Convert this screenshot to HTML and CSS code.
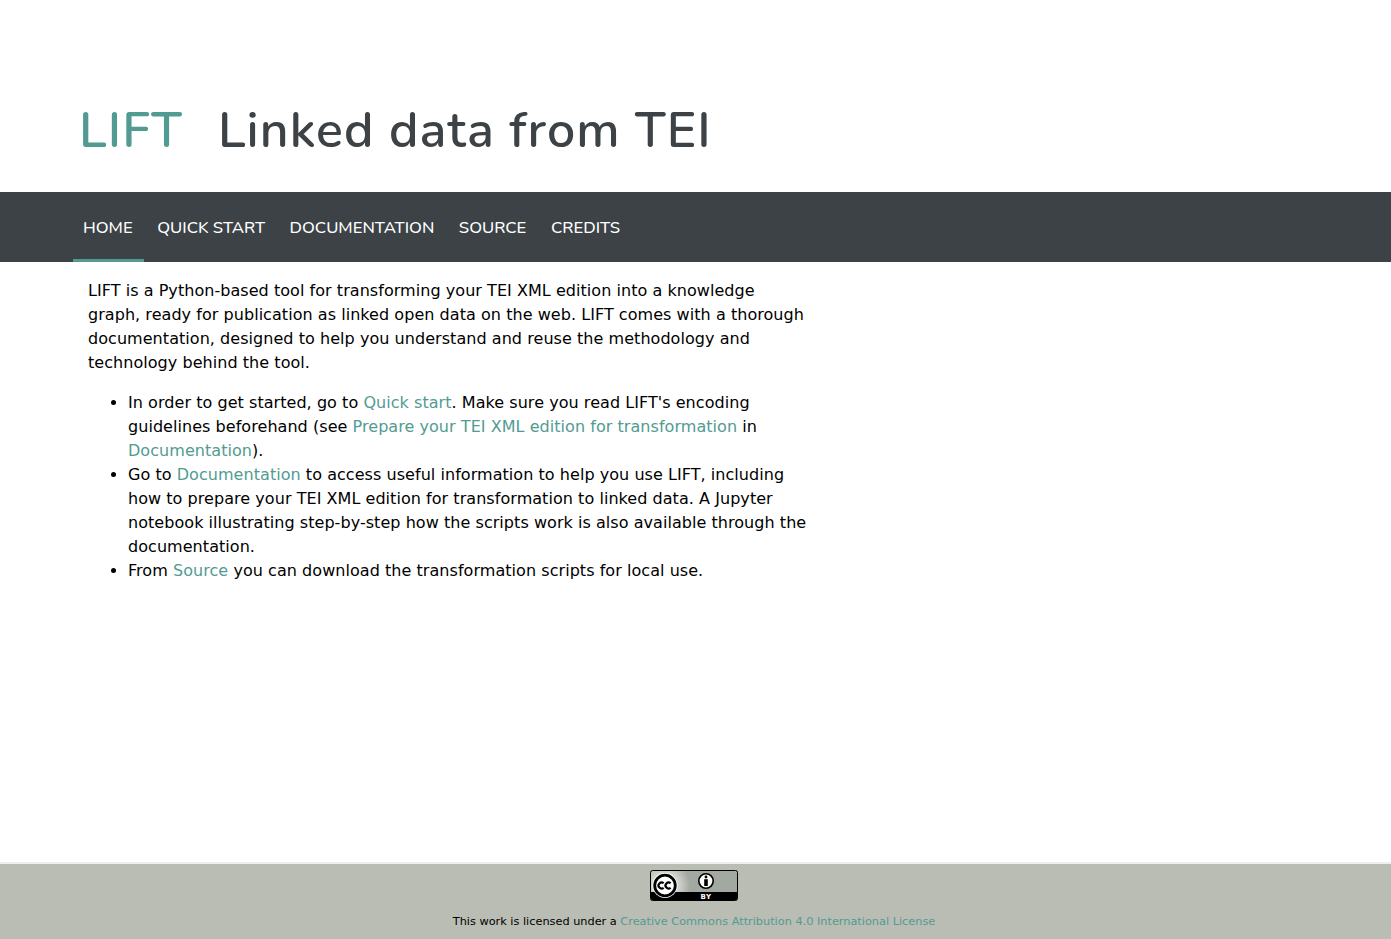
FILE: index.html
```html
<!DOCTYPE html>
<html lang="en">
<head>
    <meta charset="UTF-8">
    <title>LIFT</title>
    <link rel="stylesheet" href="styles.css">
</head>
<body>
    <header class="site-header">
        <h1 class="site-title"><span class="site-name">LIFT</span>Linked data from TEI</h1>
    </header>
    <nav class="navbar">
        <a class="nav-link active" href="#">HOME</a>
        <a class="nav-link" href="#">QUICK START</a>
        <a class="nav-link" href="#">DOCUMENTATION</a>
        <a class="nav-link" href="#">SOURCE</a>
        <a class="nav-link" href="#">CREDITS</a>
    </nav>
    <main class="content">
        <p>LIFT is a Python-based tool for transforming your TEI XML edition into a knowledge graph, ready for publication as linked open data on the web. LIFT comes with a thorough documentation, designed to help you understand and reuse the methodology and technology behind the tool.</p>
        <ul>
            <li>In order to get started, go to <a href="#">Quick start</a>. Make sure you read LIFT's encoding guidelines beforehand (see <a href="#">Prepare your TEI XML edition for transformation</a> in <a href="#">Documentation</a>).</li>
            <li>Go to <a href="#">Documentation</a> to access useful information to help you use LIFT, including how to prepare your TEI XML edition for transformation to linked data. A Jupyter notebook illustrating step-by-step how the scripts work is also available through the documentation.</li>
            <li>From <a href="#">Source</a> you can download the transformation scripts for local use.</li>
        </ul>
    </main>
    <footer class="site-footer">
        <svg class="cc-badge" width="88" height="31" viewBox="0 0 88 31">
            <defs>
                <radialGradient id="cc-glow" cx="15" cy="15.500" r="25" gradientUnits="userSpaceOnUse">
                    <stop offset="0.5" stop-color="#d6d8d2"/>
                    <stop offset="1" stop-color="#a2a9a1"/>
                </radialGradient>
            </defs>
            <rect x="0.500" y="0.500" width="87" height="30" rx="2" fill="url(#cc-glow)" stroke="#000"/>
            <path d="M1 22H87V28.500A1.500 1.500 0 0 1 85.500 30H2.500A1.500 1.500 0 0 1 1 28.500Z" fill="#000"/>
            <circle cx="15" cy="15.500" r="12.500" fill="#fff"/>
            <circle cx="15" cy="15.500" r="10.300" fill="#fff" stroke="#000" stroke-width="2.800"/>
            <path d="M13.600 13.300A3 3 0 1 0 13.600 17.700M20.600 13.300A3 3 0 1 0 20.600 17.700" fill="none" stroke="#000" stroke-width="2.200"/>
            <circle cx="56" cy="11" r="7.200" fill="#fff" stroke="#000" stroke-width="1.600"/>
            <circle cx="56" cy="7" r="1.400" fill="#000"/>
            <rect x="54.200" y="9.200" width="3.600" height="6.800" fill="#000"/>
            <text class="cc-by" x="56" y="29" text-anchor="middle">BY</text>
        </svg>
        <p class="license">This work is licensed under a <a href="#">Creative Commons Attribution 4.0 International License</a></p>
    </footer>
</body>
</html>
```

FILE: styles.css
```css
html, body { height: 100%; }
body { margin: 0; font-family: "DejaVu Sans", Verdana, sans-serif; font-size: 16px; line-height: 24px; letter-spacing: 0.05px; color: #000; background: #fff; display: flex; flex-direction: column; }
a { color: #529b92; text-decoration: none; }

.site-header { height: 192px; box-sizing: border-box; padding: 99px 0 0 79px; }
.site-title { margin: 0; font-family: "Nunito", "Open Sans", sans-serif; font-size: 50px; line-height: 64px; font-weight: 600; letter-spacing: 1.100px; color: #3c4245; }
.site-name { color: #529b92; margin-right: 35px; }

.navbar { height: 70px; background: #3c4245; padding-left: 73px; display: flex; }
.nav-link { box-sizing: border-box; height: 70px; padding: 24px 10px 0; margin-right: 4.500px; color: #fff; font-family: "Nunito", "Open Sans", sans-serif; font-size: 16.700px; font-weight: 500; letter-spacing: 0; }
.nav-link.active { border-bottom: 3px solid #529b92; padding-right: 11px; margin-right: 3.500px; }

.content { flex: 1; width: 720px; padding: 17px 0 0 88px; }
.content p { margin: 0 0 16px; }
.content ul { margin: 0; padding-left: 40px; }

.site-footer { height: 77px; box-sizing: border-box; border-top: 2px solid #eeefec; background: #babdb3; text-align: center; padding: 6px 3px 0 0; }
.cc-badge { display: block; margin: 0 auto; }
.cc-by { font-family: "DejaVu Sans", sans-serif; font-size: 7px; font-weight: 700; letter-spacing: 0.5px; fill: #fff; }
.license { margin: 9px 0 0; font-size: 11.300px; line-height: 24px; letter-spacing: 0; }
```
